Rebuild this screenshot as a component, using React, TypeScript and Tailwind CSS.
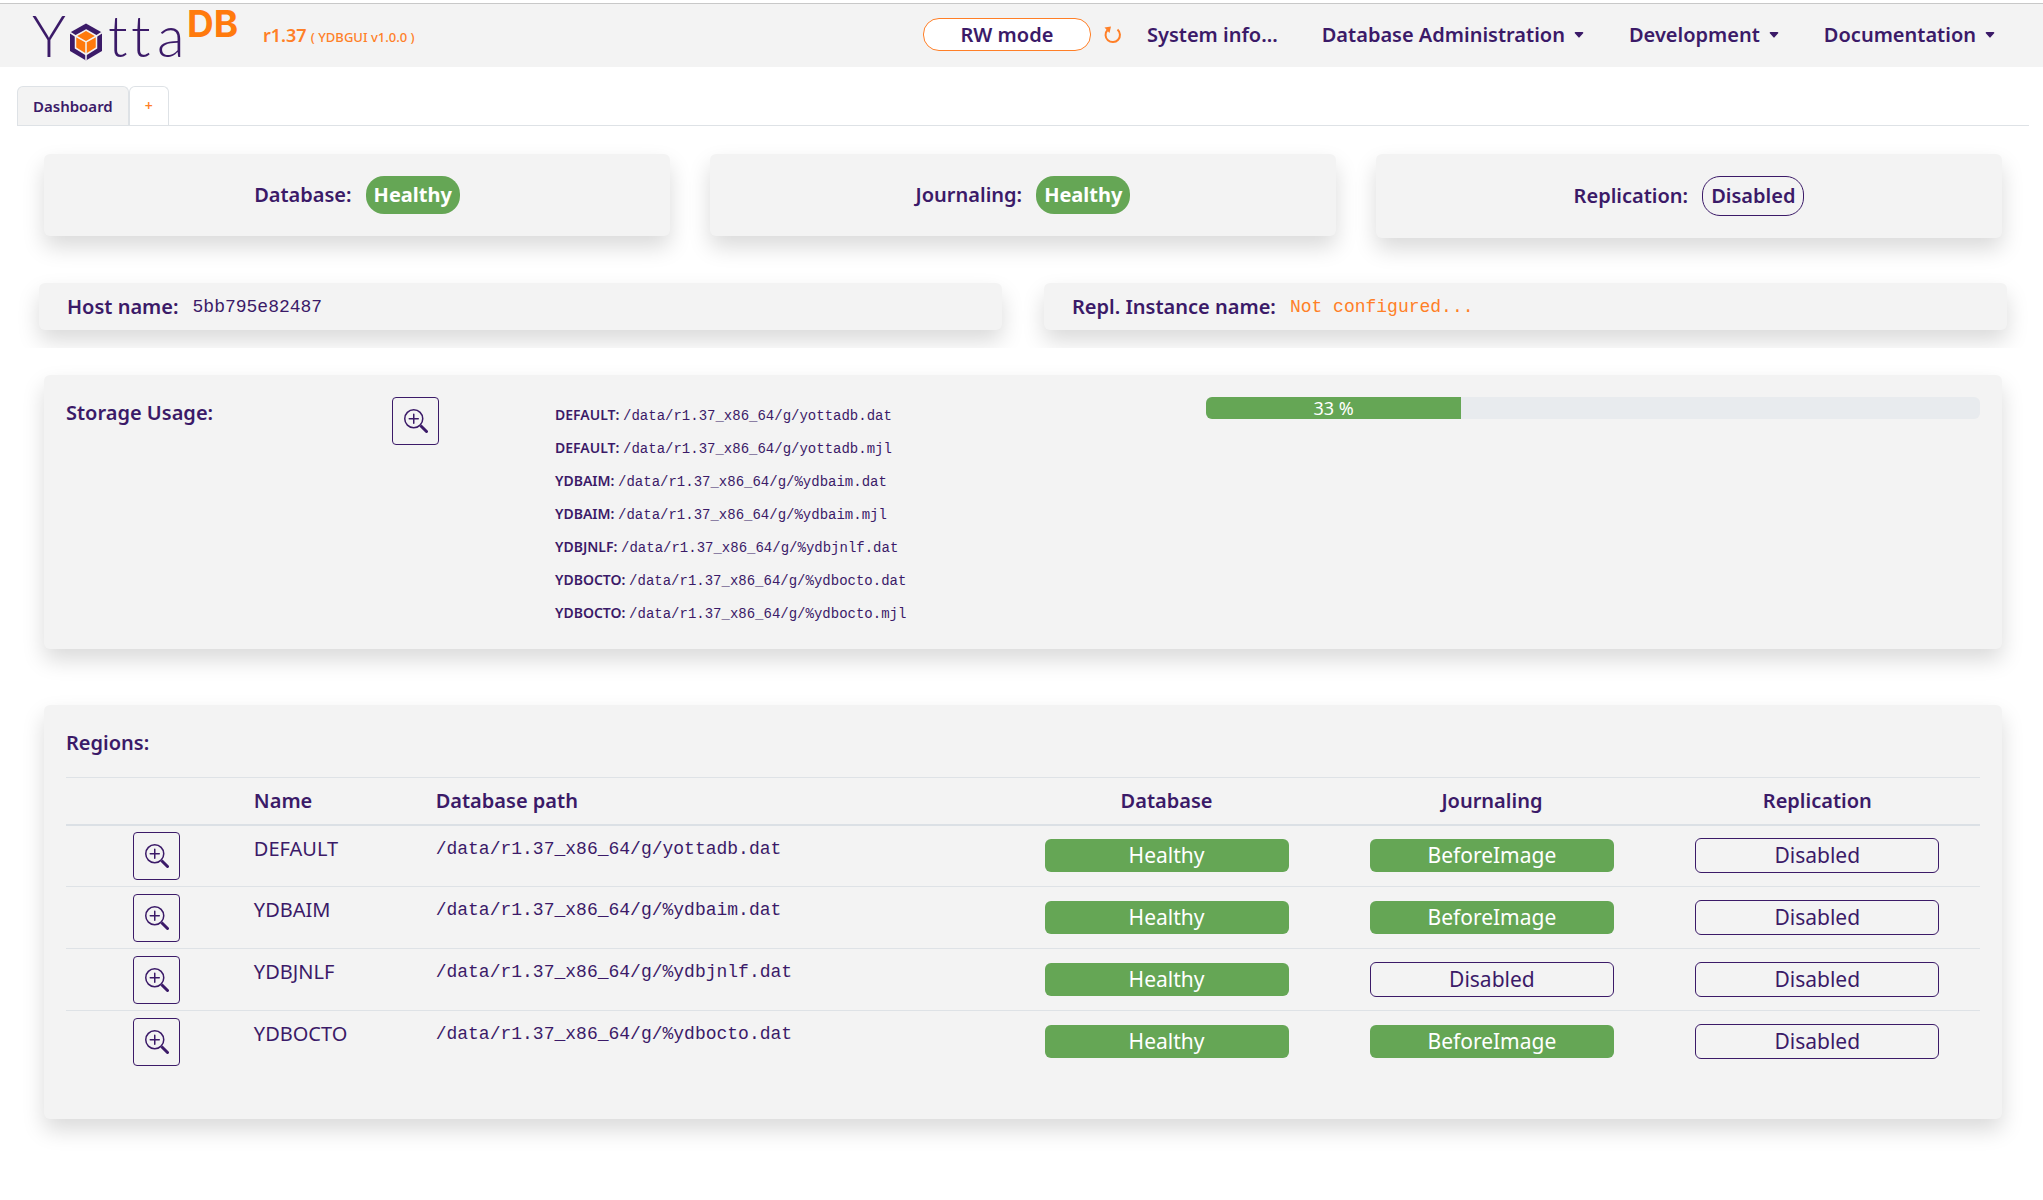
import { BsCaretDownFill, BsZoomIn } from 'react-icons/bs';

type Status = 'Healthy' | 'BeforeImage' | 'Disabled';

const menus = ['Database Administration', 'Development', 'Documentation'];

const summary: { label: string; status: Status }[] = [
  { label: 'Database:', status: 'Healthy' },
  { label: 'Journaling:', status: 'Healthy' },
  { label: 'Replication:', status: 'Disabled' },
];

const files = [
  { region: 'DEFAULT', path: '/data/r1.37_x86_64/g/yottadb.dat' },
  { region: 'DEFAULT', path: '/data/r1.37_x86_64/g/yottadb.mjl' },
  { region: 'YDBAIM', path: '/data/r1.37_x86_64/g/%ydbaim.dat' },
  { region: 'YDBAIM', path: '/data/r1.37_x86_64/g/%ydbaim.mjl' },
  { region: 'YDBJNLF', path: '/data/r1.37_x86_64/g/%ydbjnlf.dat' },
  { region: 'YDBOCTO', path: '/data/r1.37_x86_64/g/%ydbocto.dat' },
  { region: 'YDBOCTO', path: '/data/r1.37_x86_64/g/%ydbocto.mjl' },
];

const regions: { name: string; path: string; database: Status; journaling: Status; replication: Status }[] = [
  { name: 'DEFAULT', path: '/data/r1.37_x86_64/g/yottadb.dat', database: 'Healthy', journaling: 'BeforeImage', replication: 'Disabled' },
  { name: 'YDBAIM', path: '/data/r1.37_x86_64/g/%ydbaim.dat', database: 'Healthy', journaling: 'BeforeImage', replication: 'Disabled' },
  { name: 'YDBJNLF', path: '/data/r1.37_x86_64/g/%ydbjnlf.dat', database: 'Healthy', journaling: 'Disabled', replication: 'Disabled' },
  { name: 'YDBOCTO', path: '/data/r1.37_x86_64/g/%ydbocto.dat', database: 'Healthy', journaling: 'BeforeImage', replication: 'Disabled' },
];

const usage = 33;

const Logo = () => (
  <svg width="208" height="54" viewBox="0 0 208 54" role="img" aria-label="YottaDB" className="overflow-visible">
    <g fill="#3b1a68" fontFamily="Lato" fontWeight="300" fontSize="57">
      <text x="0" y="49">Y</text>
      <text x="76" y="49">t</text>
      <text x="99" y="49">t</text>
      <text x="125" y="49">a</text>
    </g>
    <path d="M54 15.500 70 24.500V43L54 52.500 38 43V24.500Z" fill="#3b1a68" />
    <path d="M54 22 64.500 28V40L54 46.500 43.500 40V28Z" fill="#ff7a0d" stroke="#f3f3f3" strokeWidth="1.500" />
    <path d="M43.500 28 54 34 64.500 28M54 34V52.500M38 24.500 43.500 28M70 24.500 64.500 28" fill="none" stroke="#f3f3f3" strokeWidth="1.500" />
    <text x="155" y="29" fill="#ff7a0d" fontFamily="Inter" fontWeight="700" fontSize="37">DB</text>
  </svg>
);

const Pill = ({ status }: { status: Status }) => (
  <span
    className={
      status === 'Disabled'
        ? 'rounded-[18px] border border-[#3b1a68] px-2 text-xl/[38px] font-semibold'
        : 'rounded-[18px] bg-[#65a655] px-2 text-xl/[38px] font-bold text-white'
    }
  >
    {status}
  </span>
);

const Badge = ({ status }: { status: Status }) => (
  <div
    className={
      status === 'Disabled'
        ? 'mx-auto w-3/4 rounded-md border border-[#3b1a68] text-[21px]/[33px]'
        : 'mx-auto my-px w-3/4 rounded-md bg-[#65a655] text-[21px]/[33px] text-white'
    }
  >
    {status}
  </div>
);

const ZoomButton = ({ label }: { label: string }) => (
  <button
    type="button"
    aria-label={label}
    className="inline-flex h-12 w-[47px] items-center justify-center rounded border border-[#3b1a68] align-top"
  >
    <BsZoomIn className="h-6 w-6" />
  </button>
);

export default function App() {
  return (
    <div className="min-h-screen bg-white pt-[3px] font-['Noto_Sans',sans-serif] text-[#3b1a68]">
      <header className="flex h-16 items-center border-t border-[#c8c8c8] bg-[#f3f3f3] pr-[47px] pb-0.5 pl-8">
        <a href="#home" className="shrink-0">
          <Logo />
        </a>
        <p className="ml-[23px] font-medium whitespace-nowrap text-[#ff7f27]">
          <span className="text-lg font-semibold">r1.37</span> <span className="text-[13px]">( YDBGUI v1.0.0 )</span>
        </p>
        <nav className="ml-auto flex items-center text-xl font-semibold whitespace-nowrap">
          <button type="button" className="h-[33px] w-[168px] rounded-2xl border border-[#ff7f27] bg-white leading-none">
            RW mode
          </button>
          <button type="button" aria-label="Refresh" className="ml-3 text-[#ff7f27]">
            <svg width="20" height="20" viewBox="0 0 20 20">
              <path d="M14.500 4.500A7.200 7.200 0 1 1 4.500 5" fill="none" stroke="currentColor" strokeWidth="2" />
              <path d="M1.500 2.500 8 1.500 6.500 8Z" fill="currentColor" />
            </svg>
          </button>
          <a href="#system-info" className="ml-6">
            System info...
          </a>
          {menus.map((menu) => (
            <button key={menu} type="button" className="ml-11 flex items-center gap-2">
              {menu}
              <BsCaretDownFill className="h-3 w-3" />
            </button>
          ))}
        </nav>
      </header>

      <div className="mt-[19px] mr-[14px] ml-[17px] flex border-b border-[#dee2e6] text-[15px] font-semibold" role="tablist">
        <button
          type="button"
          role="tab"
          aria-selected="true"
          className="h-[39px] rounded-t-md border border-b-0 border-[#dee2e6] bg-[#f3f3f3] px-[15px]"
        >
          Dashboard
        </button>
        <button
          type="button"
          aria-label="New tab"
          className="h-[39px] w-10 rounded-t-md border border-b-0 border-[#dee2e6] bg-white text-sm text-[#ff7f27]"
        >
          +
        </button>
      </div>

      <main>
        <section className="mr-[41px] ml-11 grid grid-cols-3 items-start gap-10 pt-7">
          {summary.map(({ label, status }) => (
            <div
              key={label}
              className="flex items-center justify-center gap-[14px] rounded-md bg-[#f3f3f3] py-[22px] text-xl/[38px] font-semibold shadow-[0_11px_22px_rgba(0,0,0,0.15)]"
            >
              {label}
              <Pill status={status} />
            </div>
          ))}
        </section>

        <section className="mt-4 grid grid-cols-2 gap-[42px] overflow-hidden pt-[29px] pr-9 pb-[18px] pl-[39px]">
          <div className="flex h-[47px] items-center gap-[14px] rounded-md bg-[#f3f3f3] px-7 shadow-[0_11px_22px_rgba(0,0,0,0.15)]">
            <span className="text-xl font-semibold">Host name:</span>
            <span className="font-['Liberation_Mono',monospace] text-lg">5bb795e82487</span>
          </div>
          <div className="flex h-[47px] items-center gap-[14px] rounded-md bg-[#f3f3f3] px-7 shadow-[0_11px_22px_rgba(0,0,0,0.15)]">
            <span className="text-xl font-semibold">Repl. Instance name:</span>
            <span className="font-['Liberation_Mono',monospace] text-lg text-[#ff7f27]">Not configured...</span>
          </div>
        </section>

        <section className="mt-[27px] mr-[41px] ml-11 grid grid-cols-[326fr_163fr_651fr_774fr] items-start rounded-md bg-[#f3f3f3] p-[22px] pb-5 shadow-[0_11px_22px_rgba(0,0,0,0.15)]">
          <h2 className="text-xl/8 font-semibold">Storage Usage:</h2>
          <ZoomButton label="Storage details" />
          <ul className="pt-px text-sm/[33px]">
            {files.map(({ region, path }) => (
              <li key={path} className="h-[33px]">
                <span className="font-semibold">{region}:</span>{' '}
                <span className="font-['Liberation_Mono',monospace]">{path}</span>
              </li>
            ))}
          </ul>
          <div className="h-[22px] overflow-hidden rounded-md bg-[#e8ebee]">
            <div className="h-full bg-[#65a655] text-center text-lg/[22px] text-white" style={{ width: `${usage}%` }}>
              {usage} %
            </div>
          </div>
        </section>

        <section className="mt-14 mr-[41px] ml-11 rounded-md bg-[#f3f3f3] p-[22px] pb-[46px] shadow-[0_11px_22px_rgba(0,0,0,0.15)]">
          <h2 className="mb-[18px] text-xl/8 font-semibold">Regions:</h2>
          <table className="w-full table-fixed text-left text-xl">
            <colgroup>
              <col className="w-[9.5%]" />
              <col className="w-[9.5%]" />
              <col className="w-[30%]" />
              <col className="w-[17%]" />
              <col className="w-[17%]" />
              <col className="w-[17%]" />
            </colgroup>
            <thead>
              <tr className="h-[47px] border-t border-b-2 border-t-[#dee2e6] border-b-[#dbe0e5]">
                <td />
                <th className="px-[6px] font-semibold">Name</th>
                <th className="px-[6px] font-semibold">Database path</th>
                <th className="text-center font-semibold">Database</th>
                <th className="text-center font-semibold">Journaling</th>
                <th className="text-center font-semibold">Replication</th>
              </tr>
            </thead>
            <tbody>
              {regions.map((region) => (
                <tr key={region.name} className="h-[62px] border-t border-[#dee2e6] first:border-t-0">
                  <td className="text-center">
                    <ZoomButton label={`${region.name} details`} />
                  </td>
                  <td className="px-[6px] pt-[9px] align-top">{region.name}</td>
                  <td className="px-[6px] pt-[9px] align-top font-['Liberation_Mono',monospace] text-lg/7">{region.path}</td>
                  <td className="text-center">
                    <Badge status={region.database} />
                  </td>
                  <td className="text-center">
                    <Badge status={region.journaling} />
                  </td>
                  <td className="text-center">
                    <Badge status={region.replication} />
                  </td>
                </tr>
              ))}
            </tbody>
          </table>
        </section>
      </main>
    </div>
  );
}
